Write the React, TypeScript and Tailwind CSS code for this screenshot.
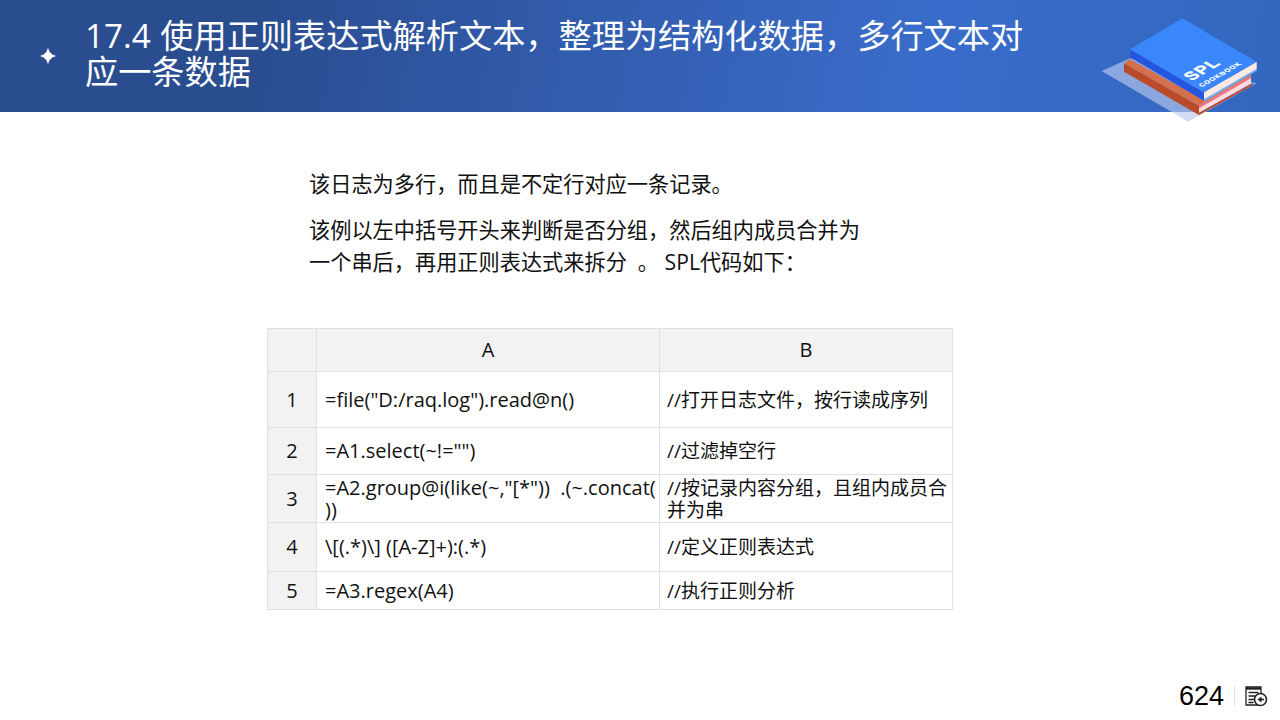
const FONT = "font-['Open_Sans','Noto_Sans_CJK_SC',sans-serif]";

const ROWS = [
  { no: "1", a: '=file("D:/raq.log").read@n()', b: "//打开日志文件，按行读成序列", h: "h-[56px]" },
  { no: "2", a: '=A1.select(~!="")', b: "//过滤掉空行", h: "h-[47px]" },
  { no: "3", a: '=A2.group@i(like(~,"[*"))  .(~.concat(\n))', b: "//按记录内容分组，且组内成员合并为串", h: "h-[48px]" },
  { no: "4", a: "\\[(.*)\\] ([A-Z]+):(.*)", b: "//定义正则表达式", h: "h-[49px]" },
  { no: "5", a: "=A3.regex(A4)", b: "//执行正则分析", h: "h-[38px]" },
];

const BookLogo = () => (
  <svg className="absolute left-[1080px] top-0" width="200" height="130" viewBox="0 0 600 390">
    <polygon points="65,213 150,175 530,250 325,365" fill="#bbc9f0" opacity="0.65" />
    <polygon points="150,178 132,190 357,318 513,228 513,222 372,300" fill="#d4704e" />
    <polygon points="132,190 357,318 357,345 132,215" fill="#b94b2a" />
    <polygon points="357,318 513,228 513,250 357,338" fill="#ffdbe0" />
    <polygon points="357,318 513,228 513,235 357,325" fill="#ee6f7c" />
    <polygon points="357,338 518,250 518,256 357,345" fill="#b94b2a" />
    <polygon points="372,298 530,207 530,213 372,305" fill="#6fb0f5" />
    <polygon points="372,277 530,185 530,207 372,298" fill="#ffe9e2" />
    <polygon points="150,148 372,277 372,302 150,172" fill="#2456e0" />
    <polygon points="307,55 530,185 372,277 150,148" fill="#3a86fb" />
    <text
      transform="matrix(0.866,-0.5,0.866,0.5,335,243)"
      fill="#fff"
      stroke="#fff"
      strokeWidth="1.5"
      fontSize="48"
      fontWeight="700"
      fontFamily="'Liberation Sans',sans-serif"
      letterSpacing="4"
    >
      SPL
    </text>
    <text
      transform="matrix(0.866,-0.5,0.866,0.5,366,262)"
      fill="#fff"
      stroke="#fff"
      strokeWidth="0.6"
      fontSize="20"
      fontWeight="700"
      fontFamily="'Liberation Sans',sans-serif"
      letterSpacing="2.5"
    >
      COOKBOOK
    </text>
  </svg>
);

const BackIcon = () => (
  <svg width="23" height="21" viewBox="0 0 23 21" fill="none" stroke="#222" strokeWidth="1.3">
    <path d="M1 1h15v18H1z" />
    <path d="M1 2.500h15" strokeWidth="2.4" />
    <path d="M3.500 6.500h10M3.500 10h8M3.500 13.500h6M3.500 16.500h5" />
    <circle cx="15.500" cy="13.500" r="6" fill="#fff" strokeWidth="1.6" />
    <path d="M19 13.500h-4" strokeWidth="1.6" />
    <path d="M16.500 10.500l-4 3 4 3z" fill="#222" stroke="none" />
  </svg>
);

export default function App() {
  return (
    <div className={`relative flex h-[720px] w-[1280px] flex-col overflow-hidden bg-white text-black ${FONT}`}>
      <header className="flex h-[112px] items-center bg-[linear-gradient(100deg,#2a4d90_20%,#3a6ccb_72%,#3267bf_100%)] pl-[39px]">
        <svg width="18" height="18" viewBox="0 0 18 18" fill="#fff">
          <path d="M9 0.500c1 4.500 3.500 7.500 8.500 8.500-5 1-7.500 4-8.500 8.500-1-4.500-3.500-7.500-8.500-8.500 5-1 7.500-4 8.500-8.500z" />
        </svg>
        <h1 className="ml-[28px] w-[950px] pb-[4px] text-[33.2px] leading-[36px] font-normal text-white [word-spacing:1px]">
          17.4 使用正则表达式解析文本，整理为结构化数据，多行文本对应一条数据
        </h1>
      </header>
      <BookLogo />

      <main className="flex-1 pt-[56px]">
        <div className="ml-[309px] w-[560px] text-[21.2px] leading-[32px] text-[#111]">
          <p>该日志为多行，而且是不定行对应一条记录。</p>
          <p className="mt-[14px]">该例以左中括号开头来判断是否分组，然后组内成员合并为</p>
          <p>一个串后，再用正则表达式来拆分&nbsp;&nbsp;。&nbsp;SPL代码如下：</p>
        </div>

        <table className="mt-[50px] ml-[267px] w-[685px] table-fixed border-collapse text-[20px] leading-[22px] text-[#111]">
          <colgroup>
            <col className="w-[49px]" />
            <col className="w-[343px]" />
            <col className="w-[293px]" />
          </colgroup>
          <thead>
            <tr className="h-[43px] bg-[#f2f2f2]">
              <th className="border border-[#e0e0e0] font-normal" />
              <th className="border border-[#e0e0e0] font-normal">A</th>
              <th className="border border-[#e0e0e0] font-normal">B</th>
            </tr>
          </thead>
          <tbody>
            {ROWS.map((row) => (
              <tr key={row.no} className={row.h}>
                <td className="border border-[#e0e0e0] bg-[#f2f2f2] text-center">{row.no}</td>
                <td className="border border-[#e0e0e0] pr-[2px] pl-[8px] whitespace-pre-wrap">{row.a}</td>
                <td className="border border-[#e0e0e0] pr-[2px] pl-[7px] text-[19px] break-all">{row.b}</td>
              </tr>
            ))}
          </tbody>
        </table>
      </main>

      <footer className="flex h-[50px] items-center justify-end pt-[2px] pr-[12px]">
        <span className="font-['Liberation_Sans',sans-serif] text-[27px] leading-none">624</span>
        <span className="mx-[10px] h-[20px] w-px bg-[#d5e0f2]" />
        <BackIcon />
      </footer>
    </div>
  );
}
